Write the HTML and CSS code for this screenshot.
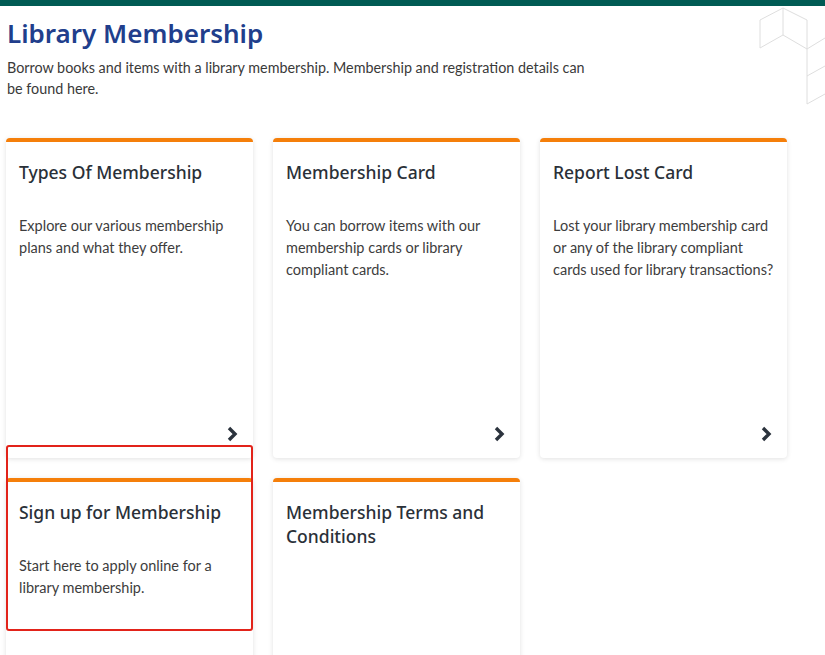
FILE: index.html
```html
<!DOCTYPE html>
<html lang="en">
  <head>
    <meta charset="UTF-8" />
    <meta name="viewport" content="width=device-width, initial-scale=1.0" />
    <title>Library Membership</title>
    <link rel="stylesheet" href="styles.css">
  </head>
  <body>
    <div class="topbar"></div>
    <svg class="deco" width="70" height="110" viewBox="755 0 70 110">
      <g fill="none" stroke="#dedede" stroke-width="1">
        <path d="M783 8 L760 20 L760 48 L783 35 Z" />
        <path d="M783 8 L807 20 L807 49 L783 35" />
        <path d="M807 49 L825 38 M807 49 L807 104 M807 76 L825 66 M807 104 L825 94" />
      </g>
    </svg>
    <main class="page">
      <h1>Library Membership</h1>
      <p class="intro">Borrow books and items with a library membership. Membership and registration details can be found here.</p>

      <div class="cards">
        <a class="card" href="#">
          <h3>Types Of Membership</h3>
          <p>Explore our various membership plans and what they offer.</p>
          <span class="arrow"><svg width="12" height="16" viewBox="0 0 12 16"><path d="M3 2 L9 8 L3 14" fill="none" stroke="#2b333d" stroke-width="3.4"/></svg></span>
        </a>
        <a class="card" href="#">
          <h3>Membership Card</h3>
          <p>You can borrow items with our membership cards or library compliant cards.</p>
          <span class="arrow"><svg width="12" height="16" viewBox="0 0 12 16"><path d="M3 2 L9 8 L3 14" fill="none" stroke="#2b333d" stroke-width="3.4"/></svg></span>
        </a>
        <a class="card" href="#">
          <h3>Report Lost Card</h3>
          <p>Lost your library membership card or any of the library compliant cards used for library transactions?</p>
          <span class="arrow"><svg width="12" height="16" viewBox="0 0 12 16"><path d="M3 2 L9 8 L3 14" fill="none" stroke="#2b333d" stroke-width="3.4"/></svg></span>
        </a>
        <a class="card marked" href="#">
          <h3>Sign up for Membership</h3>
          <p>Start here to apply online for a library membership.</p>
          <span class="highlight"></span>
        </a>
        <a class="card" href="#">
          <h3>Membership Terms and Conditions</h3>
        </a>
      </div>
    </main>
  </body>
</html>
```

FILE: styles.css
```css
body {
  margin: 0;
  font-family: Lato, "Open Sans", Arial, sans-serif;
  color: #3a3a3a;
  background-color: #fff;
  overflow: hidden;
}
.topbar {
  height: 6px;
  background-color: #005b54;
}
.deco {
  position: absolute;
  top: 0;
  right: 0;
}
.page {
  padding: 0 6px;
}
h1 {
  margin: 9px 0 0 1px;
  font-family: "Noto Sans", Arial, sans-serif;
  font-size: 26px;
  font-weight: 600;
  line-height: 36px;
  color: #213e8c;
}
.intro {
  margin: 6px 0 0 1px;
  max-width: 590px;
  font-size: 14.35px;
  line-height: 21px;
  color: #3a3a3a;
}
.cards {
  display: grid;
  grid-template-columns: repeat(3, 247px);
  gap: 20px;
  margin-top: 39px;
}
.card {
  position: relative;
  display: block;
  min-height: 320px;
  padding: 18px 10px 0 13px;
  background-color: #fff;
  border-top: 4px solid #f57f0a;
  border-radius: 4px;
  box-shadow: 0 1px 5px rgba(0, 0, 0, 0.12);
  text-decoration: none;
  color: inherit;
  box-sizing: border-box;
}
.card h3 {
  margin: 0;
  font-family: "Noto Sans", Arial, sans-serif;
  font-size: 17.5px;
  font-weight: 500;
  line-height: 24px;
  color: #2a3038;
}
.card p {
  margin: 31px 0 0;
  font-size: 14.5px;
  line-height: 22px;
  color: #3d3d3d;
}
.arrow {
  position: absolute;
  right: 15px;
  bottom: 16px;
  display: flex;
}
.highlight {
  position: absolute;
  top: -37px;
  left: 0;
  right: 0;
  height: 186px;
  border: 2px solid #e2231a;
  border-radius: 3px;
  box-sizing: border-box;
}
```
